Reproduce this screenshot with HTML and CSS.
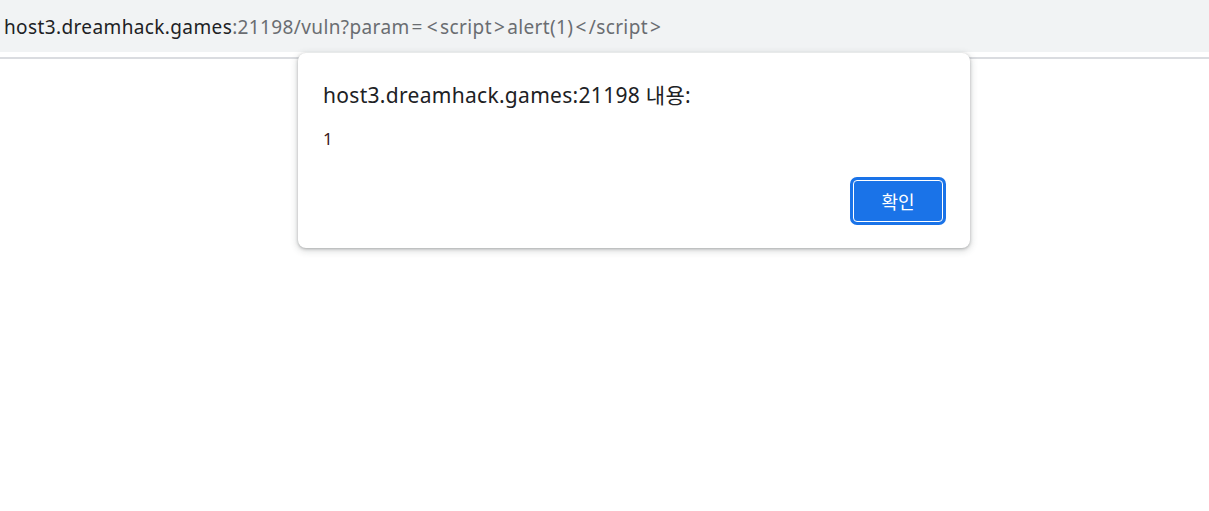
FILE: index.html
```html
<!DOCTYPE html>
<html lang="ko">
<head>
<meta charset="utf-8">
<link rel="stylesheet" href="styles.css">
</head>
<body>
<header class="omnibox">
  <div class="url"><span class="host">host3.dreamhack.games</span><span class="rest">:21198/vuln?param<span class="sym">=</span><span class="sym">&lt;</span>script<span class="sym">&gt;</span>alert(1)<span class="sym">&lt;</span>/script<span class="sym">&gt;</span></span></div>
</header>
<div class="divider"></div>
<main class="page"></main>
<div class="dialog" role="alertdialog">
  <div class="title">host3.dreamhack.games:21198 내용:</div>
  <div class="message">1</div>
  <div class="actions"><button class="ok">확인</button></div>
</div>
</body>
</html>
```
FILE: styles.css
```css
html, body {
  margin: 0;
  padding: 0;
  background: #ffffff;
  font-family: "Noto Sans", "Noto Sans CJK KR", sans-serif;
}
.omnibox {
  height: 52px;
  background: #f1f3f4;
  display: flex;
  align-items: center;
  padding-left: 4px;
}
.url {
  font-size: 19px;
  letter-spacing: 0.38px;
  color: #6a6d71;
  white-space: nowrap;
  margin-top: 2px;
}
.host { color: #202124; }
.sym { margin: 0 2px; }
.divider {
  margin-top: 5px;
  height: 2px;
  background: #dadce0;
}
.page { height: 400px; }
.dialog {
  position: absolute;
  left: 298px;
  top: 53px;
  width: 672px;
  height: 195px;
  box-sizing: border-box;
  background: #ffffff;
  border-radius: 8px;
  box-shadow: 0 1px 3px rgba(60,64,67,0.35), 0 2px 6px 2px rgba(60,64,67,0.15);
  padding: 24px 24px 23px 25px;
  display: flex;
  flex-direction: column;
}
.title {
  font-size: 21px;
  letter-spacing: 0.3px;
  line-height: 36px;
  color: #202124;
}
.message {
  font-size: 17px;
  line-height: 24px;
  color: #3c1a1a;
  margin-top: 14px;
}
.actions {
  margin-top: auto;
  display: flex;
  justify-content: flex-end;
}
.ok {
  width: 90px;
  height: 42px;
  box-sizing: border-box;
  background: #1a73e8;
  color: #ffffff;
  border: 1px solid #ffffff;
  border-radius: 4px;
  box-shadow: 0 0 0 3px #1a73e8;
  outline: none;
  font-family: "Noto Sans CJK KR", sans-serif;
  font-size: 18px;
  margin-right: 3px;
  margin-bottom: 3px;
}
```
